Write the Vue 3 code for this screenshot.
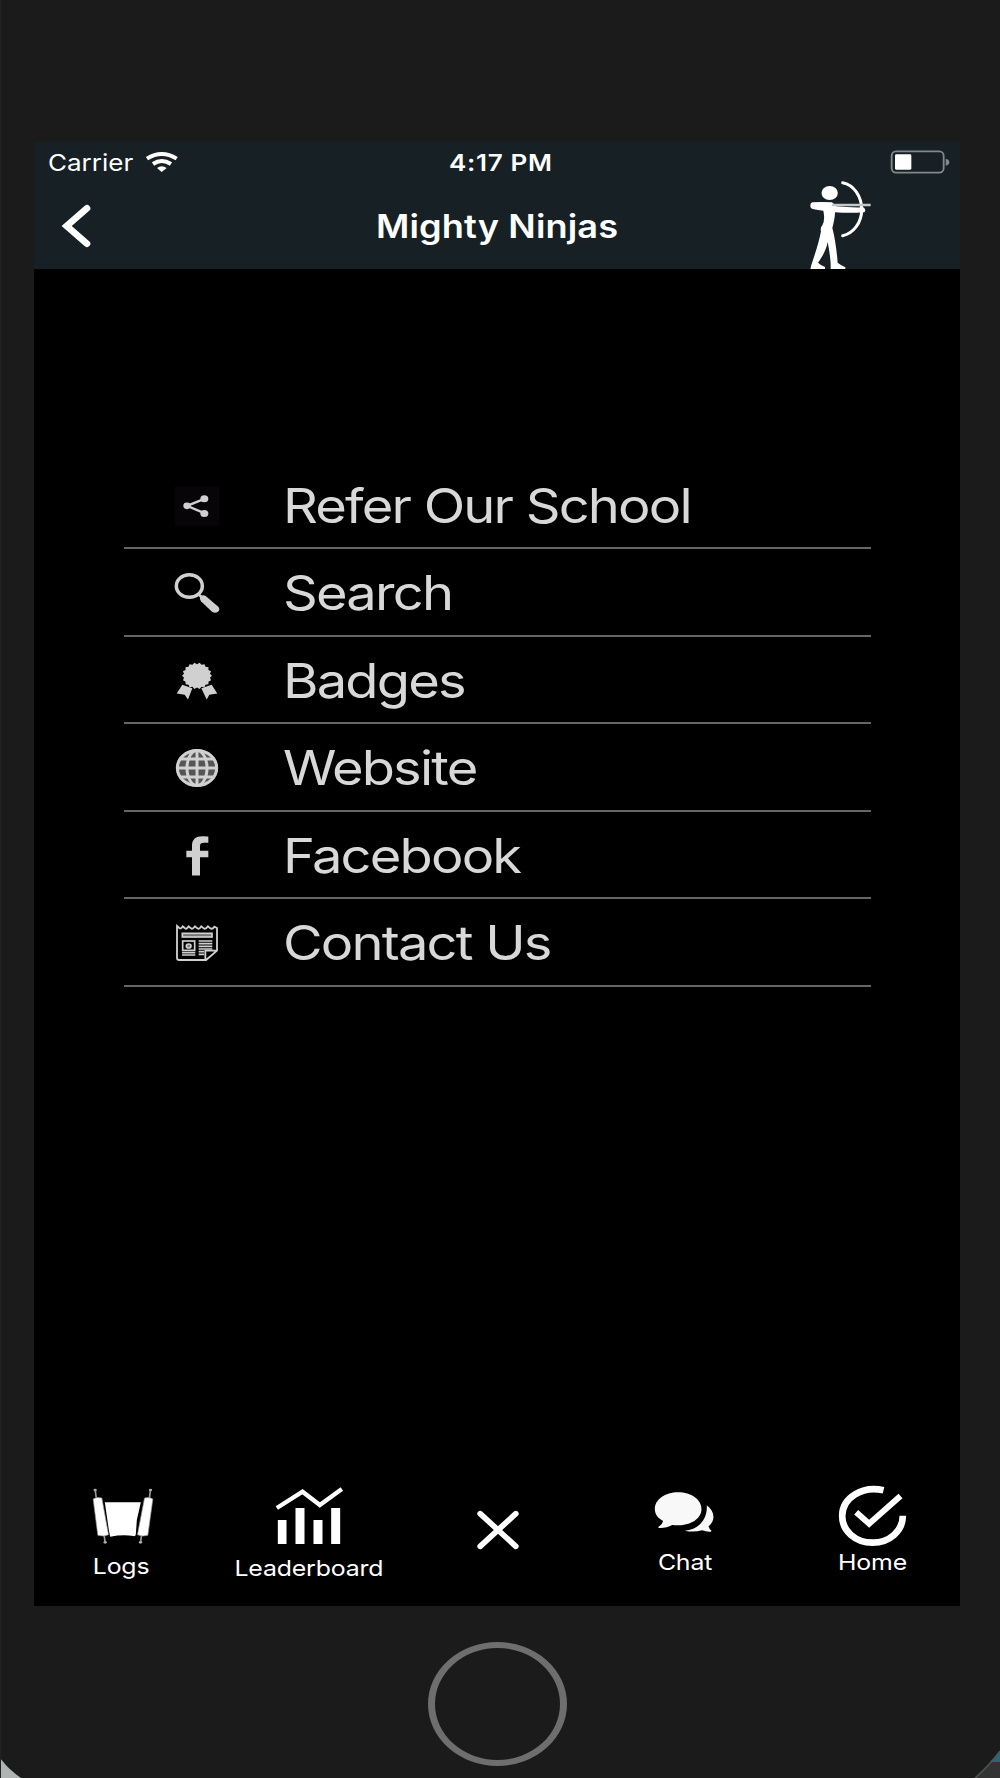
<template>
  <div class="device">
    <div class="screen">
      <header class="header">
        <div class="status-bar">
          <div class="carrier">
            <span class="wide carrier-name">Carrier</span>
            <svg class="wifi" viewBox="435 63 99 66">
              <path d="M441 86Q485 58 530 86" />
              <path d="M459 102Q485 84 513 102" />
              <path class="solid" d="M471 114Q485 103 500 114L485 126Z" />
            </svg>
          </div>
          <span class="wide time">4:17 PM</span>
          <svg class="battery" viewBox="390 60 180 72">
            <rect class="shell" x="395" y="64" width="156" height="64" rx="13" />
            <rect class="level" x="405" y="73" width="49" height="46" rx="4" />
            <path class="cap" d="M557 86Q568 88 568 96.500T557 107Z" />
          </svg>
        </div>
        <div class="nav-bar">
          <svg class="back" viewBox="186 222 87 132">
            <path d="M261 235L200 288L261 341" />
          </svg>
          <h1 class="wide title">Mighty Ninjas</h1>
          <svg class="archer" viewBox="144 150 192 267">
            <ellipse cx="209" cy="189" rx="24.500" ry="21" />
            <path d="M157 217Q185 215 216 217L229 229Q268 233 310 232Q320 240 313 247Q268 250 225 247C225 262 221 278 217 294C225 323 230 362 233 398Q243 406 256 412V417H212V402C211 379 207 359 203 336C199 359 186 382 174 398Q182 406 195 411V417H151L154 405C165 372 177 336 183 304Q180 294 187 286Q196 270 190 242Q174 240 158 237Q150 235 151 226Q151 219 157 217Z" />
            <path class="bow" d="M248 158C281 164 305 199 305 239S279 311 248 317" />
            <path class="arrow" d="M216 225H332" />
          </svg>
        </div>
      </header>

      <main class="content">
        <ul class="menu">
          <li v-for="item in items" :key="item.icon" class="menu-item">
            <svg class="menu-icon" :viewBox="item.viewBox">
              <template v-if="item.icon === 'share'">
                <rect x="195" y="78" width="132" height="117" fill="#080508" />
                <path class="stroke" stroke-width="7" d="M283 115L231 136L283 158" />
                <ellipse cx="231" cy="136" rx="11" ry="10" />
                <ellipse cx="283" cy="115" rx="12" ry="10.500" />
                <ellipse cx="283" cy="159" rx="12" ry="10.500" />
              </template>
              <template v-else-if="item.icon === 'search'">
                <ellipse class="stroke" stroke-width="10.500" cx="238" cy="378" rx="39" ry="34" />
                <path class="stroke" stroke-width="8" d="M264 402L276 412" />
                <path d="M270 411Q276 403 286 407L325 440Q332 450 323 456Q315 461 306 455L273 424Q268 418 270 411Z" />
              </template>
              <template v-else-if="item.icon === 'badge'">
                <polygon :points="sealPoints" />
                <path d="M217 673L247 683L234 717L224 703L200 699Z" />
                <path d="M305 673L274 683L290 717L298 703L322 699Z" />
              </template>
              <template v-else-if="item.icon === 'globe'">
                <ellipse cx="261" cy="144" rx="63" ry="56.500" fill="#555" />
                <g class="stroke" stroke-width="9">
                  <ellipse cx="261" cy="144" rx="59" ry="52.500" />
                  <ellipse cx="261" cy="144" rx="30" ry="52.500" />
                  <path d="M261 90V198M200 144H322M211 117H311M211 171H311" />
                </g>
              </template>
              <path
                v-else-if="item.icon === 'facebook'"
                d="M295 348V367H281Q270 367 270 377V391H295V410H270V465H246V410H229V391H246V376C246 356 258 347 277 347Q287 347 295 348Z"
              />
              <template v-else>
                <path
                  class="stroke"
                  stroke-width="5.500"
                  d="M201 618L208 624Q213 628 218 619L224 624Q229 630 236 619L243 625Q248 629 255 619L262 625Q268 629 274 619L281 625Q287 629 294 619L301 625Q307 629 313 620L321 624V692L288 720H208Q201 720 201 713ZM321 692H286V720"
                />
                <g class="stroke" stroke-width="5">
                  <rect x="217" y="640" width="89" height="11" fill="#777" />
                  <rect x="218" y="663" width="36" height="28" />
                  <ellipse cx="236" cy="678" rx="7" ry="6" fill="#777" />
                  <path d="M266 663H307M266 671H307M266 679H307M266 687H307M266 695H282M266 703H282M216 698H256M216 705H256" />
                </g>
              </template>
            </svg>
            <span class="wide menu-label">{{ item.label }}</span>
          </li>
        </ul>
      </main>

      <nav class="tab-bar">
        <a class="tab logs">
          <svg class="tab-icon" viewBox="79.5 42 207 180">
            <path class="rod" d="M104 59L107 82M270 59L267 82M131 196L134 218M243 196L240 218" />
            <path d="M133 97H241L229 150L226 193Q226 200 219 198Q187 193 149 200L145 180Z" />
            <path class="roller" d="M98 87Q108 80 124 84L144 194Q130 201 112 196Z" />
            <path class="roller" d="M277 87Q267 80 252 84L231 194Q245 201 262 196Z" />
            <ellipse cx="104" cy="60" rx="5" ry="4" fill="#aaa" />
            <ellipse cx="270" cy="60" rx="5" ry="4" fill="#aaa" />
            <ellipse cx="134" cy="217" rx="5" ry="4" fill="#aaa" />
            <ellipse cx="240" cy="217" rx="5" ry="4" fill="#aaa" />
          </svg>
          <span class="wide tab-label">Logs</span>
        </a>
        <a class="tab leaderboard">
          <svg class="tab-icon" viewBox="643.5 42 207 180">
            <path d="M652 150H678V222H652ZM705 114H732V222H705ZM759 150H786V222H759ZM812 114H839V222H812Z" />
            <path class="line" stroke-width="13" d="M649 114L726 65L778 105L844 57" />
          </svg>
          <span class="wide tab-label">Leaderboard</span>
        </a>
        <a class="tab close">
          <svg class="tab-icon" viewBox="67.5 42 207 180">
            <path class="line round" stroke-width="17" d="M122 131L229 229M229 131L122 229" />
          </svg>
        </a>
        <a class="tab chat">
          <svg class="tab-icon" viewBox="631.5 42 207 180">
            <path d="M713 67C752 67 783 89 783 117S752 166 713 166Q704 166 695 165Q678 175 655 174L653 171Q665 164 668 153C651 144 643 132 643 117C643 89 674 67 713 67Z" />
            <path d="M799 106C824 125 825 153 804 169Q806 177 813 182L811 185Q798 186 785 181Q758 188 733 182C770 179 801 153 799 106Z" />
          </svg>
          <span class="wide tab-label">Chat</span>
        </a>
        <a class="tab home">
          <svg class="tab-icon" viewBox="175.5 72 207 180">
            <path class="line" stroke-width="20" d="M312 91C250 76 188 112 188 168C188 213 228 248 279 248S370 213 370 167" />
            <path class="line" stroke-width="18" d="M230 157L269 191L363 108" />
          </svg>
          <span class="wide tab-label">Home</span>
        </a>
      </nav>
    </div>

    <div class="home-button"></div>

    <svg class="corner left" viewBox="0 0 21 20">
      <path d="M0 0Q9 12 21 20H0Z" fill="#b0b4b3" />
    </svg>
    <svg class="corner right" viewBox="0 0 26 28">
      <path d="M26 1Q15 16 1 28H26Z" fill="#333" />
      <path d="M26 1L16 12H26Z" fill="#266974" />
      <path d="M26 1Q15 16 1 28" fill="none" stroke="#505353" stroke-width="1.500" />
    </svg>
  </div>
</template>

<script setup>
const items = [
  { icon: 'share', label: 'Refer Our School', viewBox: '192 67.5 138 138' },
  { icon: 'search', label: 'Search', viewBox: '192 330 138 138' },
  { icon: 'badge', label: 'Badges', viewBox: '192 592.5 138 138' },
  { icon: 'globe', label: 'Website', viewBox: '192 75 138 138' },
  { icon: 'facebook', label: 'Facebook', viewBox: '192 337.5 138 138' },
  { icon: 'contact', label: 'Contact Us', viewBox: '192 600 138 138' },
];

// serrated edge of the badge
const sealPoints = Array.from({ length: 36 }, (_, i) => {
  const angle = (i * Math.PI) / 18;
  const r = i % 2 ? 0.9 : 1.02;
  return `${261 + 44 * r * Math.cos(angle)},${646 + 39 * r * Math.sin(angle)}`;
}).join(' ');
</script>

<style>
body {
  margin: 0;
  background: #1b1b1b;
}
</style>

<style scoped>
.device {
  position: relative;
  box-sizing: border-box;
  width: 1000px;
  height: 1778px;
  padding: 142px 40px 0 33px;
  border-left: 1px solid #232323;
  background: #1b1b1b;
  font-family: Inter, "Liberation Sans", sans-serif;
  color: #fff;
  overflow: hidden;
}

svg {
  display: block;
  flex: none;
  fill: currentColor;
  overflow: visible;
}

/* the interface is stretched horizontally */
.wide {
  display: block;
  white-space: nowrap;
  transform: scaleX(1.13);
}

.screen {
  display: flex;
  flex-direction: column;
  width: 926px;
  height: 1464px;
  background: #000;
}

.header {
  height: 127px;
  background: #172125;
}

.status-bar {
  display: grid;
  grid-template-columns: 1fr auto 1fr;
  align-items: center;
  height: 41px;
  padding: 0 10px 0 14px;
  font-size: 23px;
  line-height: 28px;
}

.carrier {
  display: flex;
  align-items: center;
}

.carrier-name {
  width: 97px;
  transform-origin: left;
}

.wifi {
  width: 33px;
  height: 22px;
  margin-bottom: 1px;
}

.wifi path {
  fill: none;
  stroke: #fff;
  stroke-width: 12;
}

.wifi .solid {
  fill: #fff;
  stroke: none;
}

.time {
  margin: 0 -1px 0 2px;
  font-weight: 600;
  letter-spacing: 0.6px;
}

.battery {
  justify-self: end;
  width: 60px;
  height: 24px;
  margin-bottom: 2px;
}

.shell {
  fill: none;
  stroke: #82888b;
  stroke-width: 5.5;
}

.cap {
  fill: #82888b;
}

.nav-bar {
  display: grid;
  grid-template: 86px / 1fr auto 1fr;
  align-items: center;
}

.back {
  width: 29px;
  height: 44px;
  margin-left: 28px;
}

.back path {
  fill: none;
  stroke: #fff;
  stroke-width: 20;
  stroke-linecap: round;
}

.title {
  margin: 1px 0 0;
  font-size: 32px;
  font-weight: 600;
  line-height: 40px;
  letter-spacing: 0.1px;
}

.archer {
  justify-self: end;
  align-self: end;
  width: 64px;
  height: 89px;
  margin-right: 88px;
}

.bow,
.arrow {
  fill: none;
  stroke: #fff;
  stroke-width: 9;
  stroke-linecap: round;
}

.arrow {
  stroke: #c5c8c9;
  stroke-width: 7;
  stroke-linecap: butt;
}

.content {
  flex: 1;
  padding: 192.5px 89px 0 90px;
}

.menu {
  margin: 0;
  padding: 0;
  list-style: none;
}

.menu-item {
  display: flex;
  align-items: center;
  gap: 63px;
  box-sizing: border-box;
  height: 87.5px;
  padding: 3px 0 0 50px;
  border-bottom: 2px solid #666;
  color: #d8d8d8;
}

.menu-icon {
  width: 46px;
  height: 46px;
  color: #d0d0d0;
}

.stroke {
  fill: none;
  stroke: currentColor;
}

.menu-label {
  font-size: 48px;
  font-weight: 400;
  line-height: 58px;
  letter-spacing: -1.6px;
  transform-origin: left;
}

.tab-bar {
  display: grid;
  grid-template-columns: repeat(5, 188px);
  justify-content: center;
  height: 122px;
}

.tab {
  display: flex;
  flex-direction: column;
  align-items: center;
}

.tab-icon {
  width: 69px;
  height: 60px;
}

.tab-label {
  margin-top: 4px;
  font-size: 22px;
  line-height: 28px;
  letter-spacing: -0.15px;
}

.logs .tab-label {
  margin-top: 8px;
}

.leaderboard .tab-label {
  margin-top: 10px;
}

.close .tab-icon,
.home .tab-icon {
  margin-left: -1px;
}

.chat .tab-icon {
  color: #f8f8f8;
}

.rod {
  fill: none;
  stroke: #999;
  stroke-width: 5;
}

.roller {
  stroke: #999;
  stroke-width: 2;
}

.line {
  fill: none;
  stroke: #fff;
}

.round {
  stroke-linecap: round;
}

.home-button {
  box-sizing: border-box;
  width: 139px;
  height: 124px;
  margin: 36px 0 0 394px;
  border: solid #6e6e6e;
  border-width: 6px 7px;
  border-radius: 50%;
}

.corner {
  position: absolute;
  bottom: 0;
}

.left {
  left: -1px;
  width: 21px;
  height: 20px;
}

.right {
  right: 0;
  width: 26px;
  height: 28px;
}
</style>
